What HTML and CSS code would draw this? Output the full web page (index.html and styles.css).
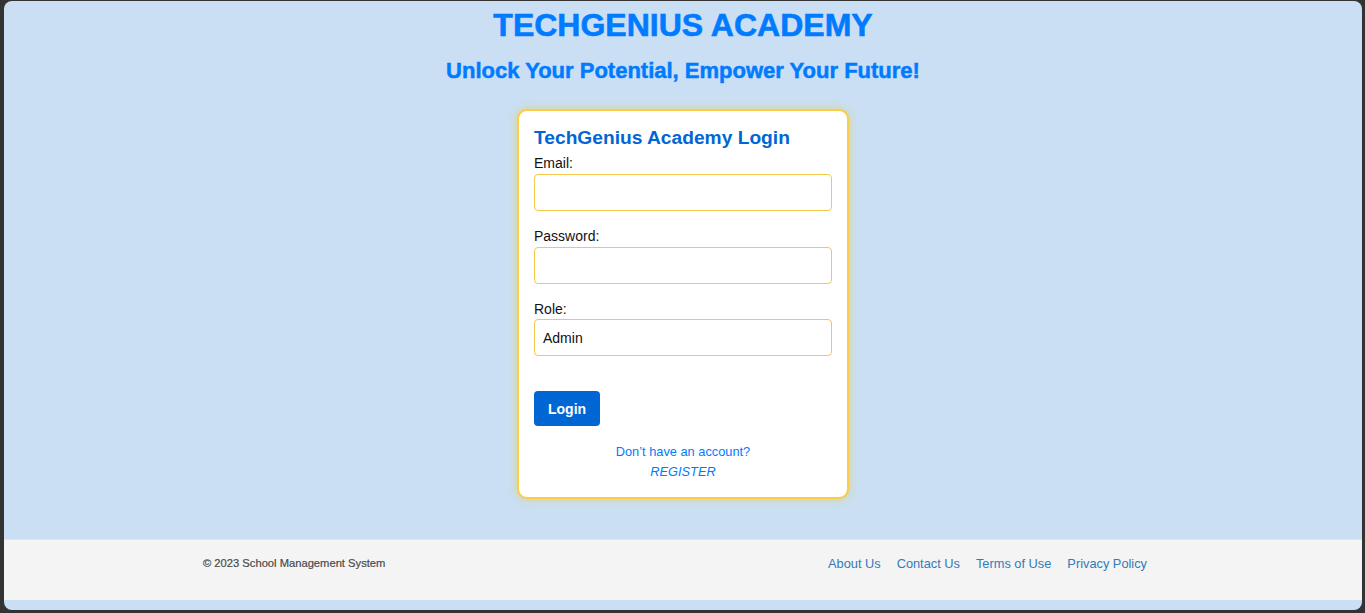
FILE: index.html
```html
<!DOCTYPE html>
<html lang="en">
<head>
<meta charset="utf-8">
<title>TechGenius Academy</title>
<link rel="stylesheet" href="styles.css">
</head>
<body>
  <header class="site-header">
    <h1 class="brand">TECHGENIUS ACADEMY</h1>
    <p class="tagline">Unlock Your Potential, Empower Your Future!</p>
  </header>
  <main class="main">
    <form class="card">
      <h2 class="card-title">TechGenius Academy Login</h2>
      <div class="group">
        <label class="label">Email:</label>
        <input class="field" type="text">
      </div>
      <div class="group">
        <label class="label">Password:</label>
        <input class="field" type="password">
      </div>
      <div class="group group-last">
        <label class="label">Role:</label>
        <div class="field select">Admin</div>
      </div>
      <button class="btn" type="button">Login</button>
      <div class="register">
        <span class="reg-line">Don’t have an account?</span>
        <span class="reg-line reg-link">REGISTER</span>
      </div>
    </form>
  </main>
  <footer class="footer">
    <div class="footer-inner">
      <span class="copy">© 2023 School Management System</span>
      <nav class="links">
        <a class="link">About Us</a>
        <a class="link">Contact Us</a>
        <a class="link">Terms of Use</a>
        <a class="link">Privacy Policy</a>
      </nav>
    </div>
  </footer>
</body>
</html>
```
FILE: styles.css
```css
html {
  background: #333333;
  height: 100%;
}
body {
  margin: 1px 3px 3px 4px;
  height: 609px;
  box-sizing: border-box;
  padding-bottom: 10px;
  border-radius: 8px;
  background: #cadff3;
  overflow: hidden;
  display: flex;
  flex-direction: column;
  font-family: "Liberation Sans", Arial, sans-serif;
}
.site-header {
  text-align: center;
}
.brand {
  margin: 6px 0 0;
  font-size: 32px;
  line-height: 37px;
  font-weight: bold;
  color: #007bff;
  -webkit-text-stroke: 0.6px #007bff;
}
.tagline {
  margin: 14px 0 0;
  font-size: 22px;
  line-height: 25px;
  font-weight: bold;
  color: #007bff;
  -webkit-text-stroke: 0.5px #007bff;
}
.main {
  display: flex;
  justify-content: center;
  margin-top: 26px;
}
.card {
  width: 298px;
  padding: 15px;
  border: 2px solid #f9cd45;
  border-radius: 10px;
  background: #ffffff;
  box-shadow: 0 0 8px rgba(240, 200, 40, 0.55);
  display: flex;
  flex-direction: column;
}
.card-title {
  margin: 0 0 5px;
  font-size: 19.2px;
  line-height: 24px;
  font-weight: bold;
  color: #0066d4;
}
.group {
  display: flex;
  flex-direction: column;
  margin-bottom: 17px;
}
.group-last .label {
  line-height: 16px;
}
.label {
  font-size: 14px;
  line-height: 17px;
  margin-bottom: 2px;
  color: #111;
}
.field {
  box-sizing: border-box;
  height: 37px;
  width: 100%;
  margin: 0;
  border: 1px solid #f5c84a;
  border-radius: 4px;
  background: #fff;
  padding: 0 8px;
  font-family: inherit;
  font-size: 14px;
  outline: none;
}
.select {
  display: flex;
  align-items: center;
  color: #111;
}
.btn {
  align-self: flex-start;
  margin-top: 18px;
  height: 35px;
  padding: 0 14px;
  border: none;
  border-radius: 4px;
  background: #0066d4;
  color: #fff;
  font-family: inherit;
  font-size: 14px;
  font-weight: bold;
}
.register {
  margin-top: 16px;
  display: flex;
  flex-direction: column;
  align-items: center;
}
.reg-line {
  font-size: 12.8px;
  line-height: 20px;
  color: #007bff;
}
.reg-link {
  font-style: italic;
}
.footer {
  margin-top: auto;
  height: 61px;
  box-sizing: border-box;
  border-top: 1px solid #e4e4e4;
  padding-top: 16px;
  background: #f4f4f4;
  display: flex;
  justify-content: center;
}
.footer-inner {
  width: 960px;
  display: flex;
  justify-content: space-between;
  align-items: flex-start;
}
.copy {
  font-size: 11.2px;
  line-height: 15px;
  color: #4a4a4a;
  -webkit-text-stroke: 0.2px #4a4a4a;
}
.links {
  display: flex;
}
.link {
  margin-right: 16px;
  font-size: 12.8px;
  line-height: 15px;
  color: #337ab7;
}
```
